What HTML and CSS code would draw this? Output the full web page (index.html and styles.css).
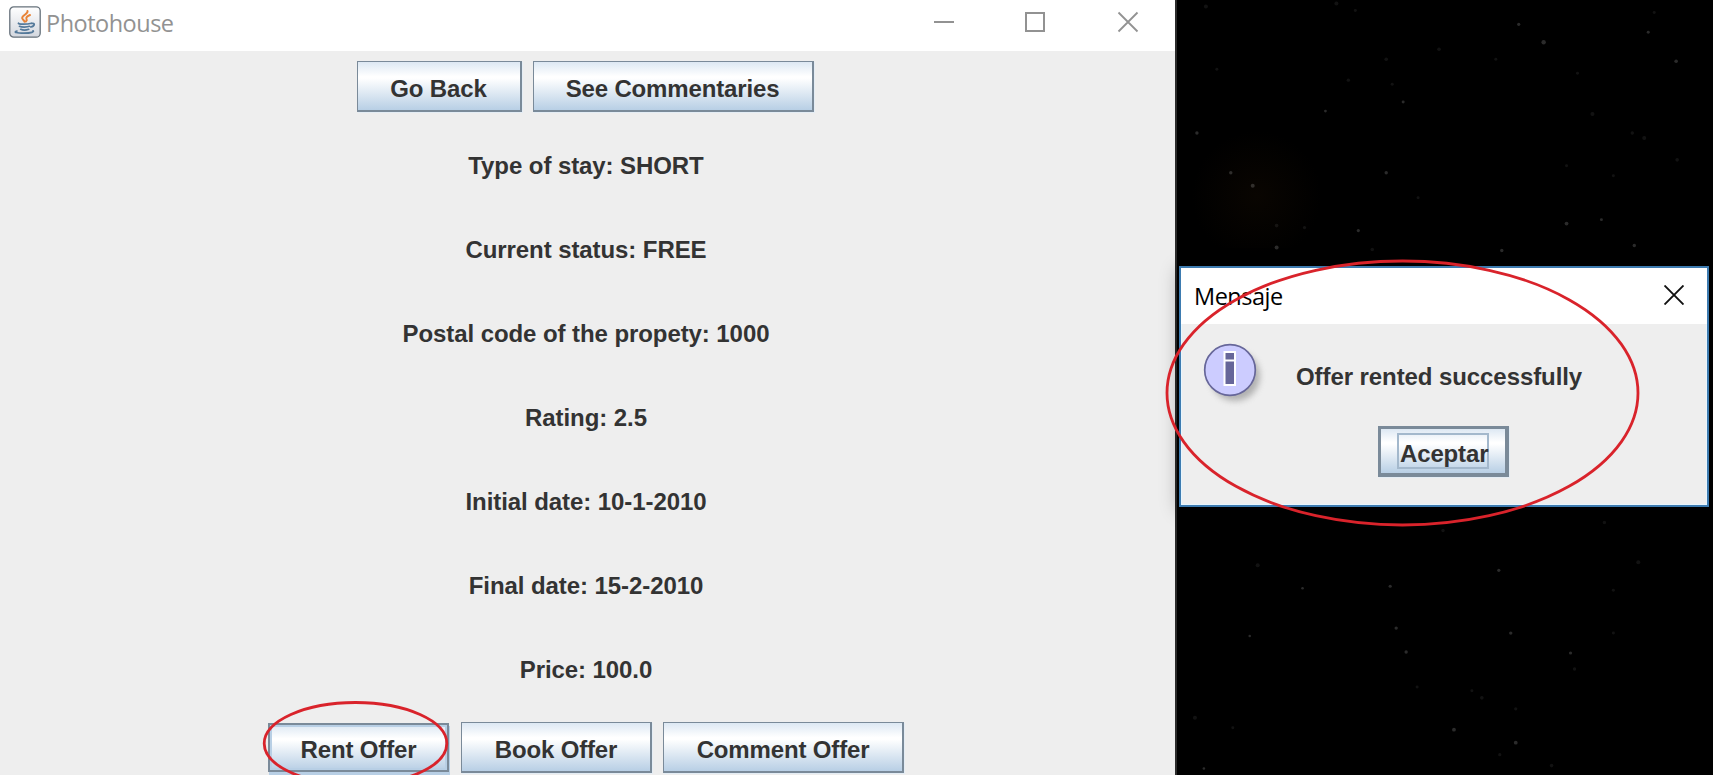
FILE: index.html
```
<!DOCTYPE html>
<html lang="en">
<head>
<meta charset="utf-8">
<title>Photohouse</title>
<link rel="stylesheet" href="styles.css">
</head>
<body>
<div class="desktop">
  <main class="window">
    <header class="titlebar">
      <svg class="java" width="32" height="32" viewBox="0 0 32 32">
        <defs><linearGradient id="tile" x2="0" y2="1"><stop stop-color="#fff"/><stop offset="1" stop-color="#d3d7de"/></linearGradient></defs>
        <rect x=".8" y=".8" width="30.4" height="30.4" rx="4" fill="url(#tile)" stroke="#66717b" stroke-width="1.3"/>
        <g fill="none" stroke-linecap="round">
          <path d="M18.5 5c1 3-6.500 4.500-5.200 7.500.4 1.200 2 2 2.200 3.200M21 9c-2.500 1-4.300 2.500-3.500 4 .6 1 .6 1.500-.6 2.500" stroke="#e98336" stroke-width="2"/>
          <path d="M9.500 17.200c-1 1.200 8 1.500 13 0M10.500 20.300c2 1 7.500 1 10 0M11.700 23.300c2 1 5.500 1 8 0M22.500 17.500c4-1 3.500 2.500-.7 3.500M8 25c-4 1.200-.5 2.200 7 2.200s10.500-1.400 9-2.400" stroke="#54799a" stroke-width="1.700"/>
        </g>
      </svg>
      <span class="title">Photohouse</span>
      <svg class="controls" width="206" height="22" viewBox="0 0 206 22" fill="none" stroke="#929292">
        <path d="M0 11h20" stroke-width="2"/>
        <rect x="92" y="2" width="18" height="18" stroke-width="2"/>
        <path d="M184.500 1.500l19 19M203.500 1.500l-19 19" stroke-width="1.800"/>
      </svg>
    </header>
    <div class="row top">
      <button class="btn back">Go Back</button>
      <button class="btn see">See Commentaries</button>
    </div>
    <div class="details">
      <p>Type of stay: SHORT</p>
      <p>Current status: FREE</p>
      <p>Postal code of the propety: 1000</p>
      <p>Rating: 2.5</p>
      <p>Initial date: 10-1-2010</p>
      <p>Final date: 15-2-2010</p>
      <p>Price: 100.0</p>
    </div>
    <div class="row">
      <button class="btn rent">Rent Offer</button>
      <button class="btn book">Book Offer</button>
      <button class="btn comment">Comment Offer</button>
    </div>
  </main>
  <svg class="stars" width="538" height="775" viewBox="1175 0 538 775" fill="#fff">
    <defs><radialGradient id="glow"><stop stop-color="#090501"/><stop offset="1" stop-color="#000"/></radialGradient></defs>
    <ellipse cx="1255" cy="195" rx="65" ry="65" fill="url(#glow)"/>
    <g opacity=".17">
      <circle cx="1518" cy="23" r="1.600"/><circle cx="1543" cy="41" r="2.200"/><circle cx="1648" cy="31" r="1.500"/><circle cx="1676" cy="60" r="1.800"/><circle cx="1402" cy="101" r="1.500"/><circle cx="1324" cy="110" r="1.400"/><circle cx="1195" cy="132" r="1.700"/><circle cx="1229" cy="172" r="1.700"/><circle cx="1251" cy="185" r="2"/><circle cx="1385" cy="172" r="1.700"/><circle cx="1275" cy="247" r="2"/><circle cx="1357" cy="230" r="1.600"/><circle cx="1501" cy="250" r="1.700"/><circle cx="1566" cy="223" r="1.900"/><circle cx="1601" cy="219" r="1.500"/><circle cx="1634" cy="245" r="1.700"/>
      <circle cx="1498" cy="571" r="1.600"/><circle cx="1389" cy="587" r="1.600"/><circle cx="1301" cy="589" r="1.300"/><circle cx="1395" cy="629" r="1.700"/><circle cx="1405" cy="653" r="1.700"/><circle cx="1510" cy="634" r="1.700"/><circle cx="1570" cy="654" r="1.600"/><circle cx="1248" cy="637" r="1.300"/><circle cx="1453" cy="731" r="1.900"/><circle cx="1515" cy="744" r="1.900"/><circle cx="1202" cy="770" r="1.300"/>
    </g>
    <g opacity=".07">
      <circle cx="1204" cy="5" r="2"/><circle cx="1335" cy="2" r="2"/><circle cx="1354" cy="9" r="1.500"/><circle cx="1654" cy="11" r="1.500"/><circle cx="1438" cy="48" r="1.800"/><circle cx="1385" cy="58" r="1.800"/><circle cx="1215" cy="68" r="1.500"/><circle cx="1347" cy="79" r="1.700"/><circle cx="1391" cy="83" r="1.500"/><circle cx="1495" cy="58" r="1.500"/><circle cx="1577" cy="72" r="1.500"/><circle cx="1592" cy="113" r="2"/><circle cx="1632" cy="132" r="1.700"/><circle cx="1644" cy="137" r="2"/><circle cx="1677" cy="159" r="1.800"/><circle cx="1566" cy="165" r="1.500"/><circle cx="1613" cy="175" r="1.500"/><circle cx="1417" cy="197" r="1.500"/><circle cx="1275" cy="225" r="1.800"/><circle cx="1303" cy="227" r="1.600"/><circle cx="1371" cy="249" r="1.800"/>
      <circle cx="1604" cy="523" r="1.700"/><circle cx="1442" cy="531" r="1.700"/><circle cx="1256" cy="566" r="2"/><circle cx="1638" cy="563" r="2"/><circle cx="1613" cy="591" r="1.500"/><circle cx="1613" cy="634" r="1.500"/><circle cx="1574" cy="670" r="1.700"/><circle cx="1416" cy="688" r="1.500"/><circle cx="1471" cy="692" r="1.500"/><circle cx="1481" cy="699" r="1.800"/><circle cx="1193" cy="719" r="2"/><circle cx="1231" cy="729" r="1.500"/><circle cx="1515" cy="710" r="1.600"/><circle cx="1499" cy="756" r="1.600"/><circle cx="1551" cy="767" r="1.800"/>
    </g>
  </svg>

  <section class="dialog">
    <header class="dialog-bar">
      <span class="title">Mensaje</span>
      <svg width="20" height="20" viewBox="0 0 20 20"><path d="M.5.5l19 19M19.500.5l-19 19" stroke="#111" stroke-width="1.900"/></svg>
    </header>
    <div class="message">
      <svg class="info" width="66" height="66" viewBox="0 0 66 66">
        <defs><filter id="soft" x="-30%" y="-30%" width="160%" height="160%"><feGaussianBlur stdDeviation="3"/></filter></defs>
        <circle cx="33" cy="34" r="25" fill="#888" opacity=".6" filter="url(#soft)"/>
        <circle cx="28" cy="28" r="25.300" fill="#ccf" stroke="#666699" stroke-width="1.700"/>
        <path d="M22.500 10h10.500v8.500h-10.500zM22.500 18.500h10.500v24.500h-10.500z" fill="#669" stroke="#fff" stroke-width="2"/>
      </svg>
      <p>Offer rented successfully</p>
    </div>
    <button class="btn accept"><span>Aceptar</span></button>
  </section>

  <svg class="marks" width="1713" height="775" viewBox="0 0 1713 775" fill="none" stroke="#d9232b" stroke-width="2.800">
    <ellipse cx="1402.500" cy="393" rx="235.500" ry="132"/>
    <ellipse cx="355.500" cy="743.500" rx="91.300" ry="41"/>
  </svg>
</div>
</body>
</html>
```
FILE: styles.css
```
* { box-sizing: border-box; }
body { margin: 0; }
p { margin: 0; }
.desktop {
  position: relative;
  display: flex;
  width: 1713px;
  height: 775px;
  overflow: hidden;
  background: #000;
  color: #333;
  font: bold 24px/28px "Liberation Sans", Arial, sans-serif;
  letter-spacing: -.08px;
}
.window { flex: none; width: 1175px; height: 775px; background: #eee; }
.titlebar {
  display: flex;
  align-items: flex-start;
  height: 51px;
  padding: 6px 35px 0 9px;
  background: #fff;
}
.title {
  font: 23.5px/34px "Open Sans", "Noto Sans", sans-serif;
  letter-spacing: -.5px;
  white-space: nowrap;
}
.titlebar .title { margin-left: 5px; color: #929292; }
.controls { margin-left: auto; margin-top: 5px; }
.row { display: flex; justify-content: center; gap: 11px; padding-right: 3px; }
.top { padding: 10px 5px 0 0; }
.btn {
  flex: none;
  height: 51px;
  margin: 0;
  padding: 5px 0 0;
  border: solid #7a8a99;
  border-width: 1px 2px 2px 1px;
  border-radius: 0;
  background: linear-gradient(#dde8f3 0%, #fff 30%, #fff 34%, #b8cfe5 100%);
  box-shadow: 1px 1px #e4edf5;
  color: #333;
  font: inherit;
  letter-spacing: -.15px;
  white-space: nowrap;
}
.back { width: 165px; }
.see { width: 281px; }
.book { width: 191px; }
.comment { width: 241px; }
.rent {
  width: 181px;
  height: 49px;
  margin: 1px 1px 0 0;
  padding-top: 4px;
  border-width: 2px;
  box-shadow: inset 0 0 0 2px #b8cfe5, 1px 3px #b8cfe5;
}
.details {
  display: grid;
  grid-template-rows: repeat(7, 84px);
  align-items: center;
  padding: 12px 3px 10px 0;
  text-align: center;
}
.stars { flex: none; border-left: 2px solid #2b2b2b; }
.dialog {
  position: absolute;
  left: 1179px;
  top: 266px;
  width: 530px;
  height: 241px;
  border: 2px solid #3d7bb0;
  background: #eee;
  box-shadow: inset 0 0 0 1px #e7f6ff, 0 3px 18px rgba(0, 0, 0, .3);
}
.dialog-bar {
  display: flex;
  justify-content: space-between;
  height: 56px;
  padding: 11px 23px 0 13px;
  background: #fff;
  color: #000;
}
.dialog-bar svg { margin-top: 6px; }
.message { display: flex; padding: 18px 0 0 21px; }
.message p { margin: 21px 0 0 28px; }
.accept {
  display: block;
  width: 131px;
  margin: 18px 0 0 197px;
  padding: 0 0 0 16px;
  border-width: 3px 4px 4px 3px;
  text-align: left;
}
.accept span {
  display: block;
  width: 92px;
  height: 36px;
  padding: 5px 0 0 1px;
  border: 2px solid #a3b8cc;
}
.marks { position: absolute; inset: 0; pointer-events: none; }
```
